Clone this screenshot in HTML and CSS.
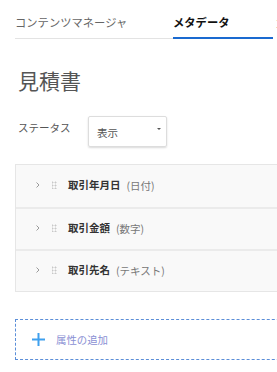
FILE: index.html
```html
<!DOCTYPE html>
<html lang="ja">

<head>
  <meta charset="UTF-8" />
  <title>メタデータ</title>
  <meta name="viewport" content="width=device-width, initial-scale=1.0" />
  <link rel="stylesheet" href="styles.css">
</head>

<body>
  <nav class="tabs">
    <a class="tab">コンテンツマネージャ</a>
    <a class="tab active">メタデータ</a>
    <a class="tab">コ</a>
  </nav>

  <h1 class="title">見積書</h1>

  <div class="status">
    <label>ステータス</label>
    <div class="select">
      <span>表示</span>
      <i class="caret"></i>
    </div>
  </div>

  <ul class="fields">
    <li class="field">
      <svg class="chevron" width="4" height="6" viewBox="0 0 4 6"><polyline points="0.5,0.5 3,3 0.5,5.5" fill="none" stroke="#9a9a9a" stroke-width="1" /></svg>
      <i class="grip"></i>
      <span class="name">取引年月日</span>
      <span class="type">(日付)</span>
    </li>
    <li class="field">
      <svg class="chevron" width="4" height="6" viewBox="0 0 4 6"><polyline points="0.5,0.5 3,3 0.5,5.5" fill="none" stroke="#9a9a9a" stroke-width="1" /></svg>
      <i class="grip"></i>
      <span class="name">取引金額</span>
      <span class="type">(数字)</span>
    </li>
    <li class="field">
      <svg class="chevron" width="4" height="6" viewBox="0 0 4 6"><polyline points="0.5,0.5 3,3 0.5,5.5" fill="none" stroke="#9a9a9a" stroke-width="1" /></svg>
      <i class="grip"></i>
      <span class="name">取引先名</span>
      <span class="type">(テキスト)</span>
    </li>
  </ul>

  <button class="add">
    <svg width="13" height="13" viewBox="0 0 13 13"><path d="M6.5 0v13M0 6.5h13" stroke="#3fa0ee" stroke-width="2" /></svg>
    <span>属性の追加</span>
  </button>
</body>

</html>
```

FILE: styles.css
```css
html,
body {
  overflow: hidden;
}

body {
  margin: 0;
  padding-left: 15px;
  background: #fff;
  font-family: "Noto Sans CJK JP", "Noto Sans", sans-serif;
  color: #333;
  width: 300px;
}

.tabs {
  display: flex;
  align-items: flex-end;
  white-space: nowrap;
}

.tab {
  display: block;
  flex-shrink: 0;
  padding: 14px 0 8px;
  font-size: 11.3px;
  line-height: 16px;
  color: #666;
  border-bottom: 1px solid #e3e3e3;
}

.tab:first-child {
  width: 158px;
}

.tab.active {
  width: 100px;
  padding-bottom: 7px;
  color: #111;
  font-weight: 700;
  border-bottom: 2px solid #1a6ad0;
}

.tab:last-child {
  margin-left: 2px;
  border-bottom: none;
  color: #888;
}

.title {
  margin: 27px 0 0 3px;
  font-size: 21px;
  line-height: 28px;
  font-weight: 400;
  color: #555;
}

.status {
  display: flex;
  margin-top: 22px;
}

.status label {
  width: 70px;
  padding: 5px 0 0 3px;
  font-size: 10.5px;
  line-height: 14px;
  color: #555;
}

.select {
  position: relative;
  box-sizing: border-box;
  width: 79px;
  height: 31px;
  padding: 9px 0 0 8px;
  border: 1px solid #ddd;
  border-radius: 2px;
  box-shadow: 0 1px 2px rgba(0, 0, 0, 0.15);
  font-size: 10.5px;
  line-height: 14px;
  color: #555;
}

.caret {
  position: absolute;
  right: 5px;
  top: 11px;
  border-left: 2px solid transparent;
  border-right: 2px solid transparent;
  border-top: 2px solid #555;
}

.fields {
  list-style: none;
  margin: 17px 0 0;
  padding: 0;
  width: 290px;
  border: 1px solid #e6e6e6;
  background: #f9f9f9;
}

.field {
  display: flex;
  align-items: center;
  height: 42px;
  padding: 0 0 3px 20px;
  box-sizing: border-box;
}

.field + .field {
  border-top: 2px solid #ebebeb;
}

.chevron {
  display: block;
}

.grip {
  width: 5px;
  height: 8px;
  margin: 0 11px 0 12px;
  background-image: radial-gradient(circle, #c8c8c8 0.9px, transparent 1.1px);
  background-size: 3px 3px;
  background-position: -1px 0;
}

.name {
  font-size: 10.5px;
  font-weight: 700;
  color: #333;
}

.type {
  margin: 2px 0 0 6px;
  font-size: 10.5px;
  color: #777;
}

.add {
  display: flex;
  align-items: center;
  gap: 11px;
  box-sizing: border-box;
  width: 290px;
  height: 41px;
  margin-top: 27px;
  padding: 0 0 0 16px;
  border: 1px dashed #5b8ed8;
  background: #fff;
  font-family: inherit;
  font-size: 10.4px;
  color: #8a90d4;
}

.add svg {
  display: block;
}
```
